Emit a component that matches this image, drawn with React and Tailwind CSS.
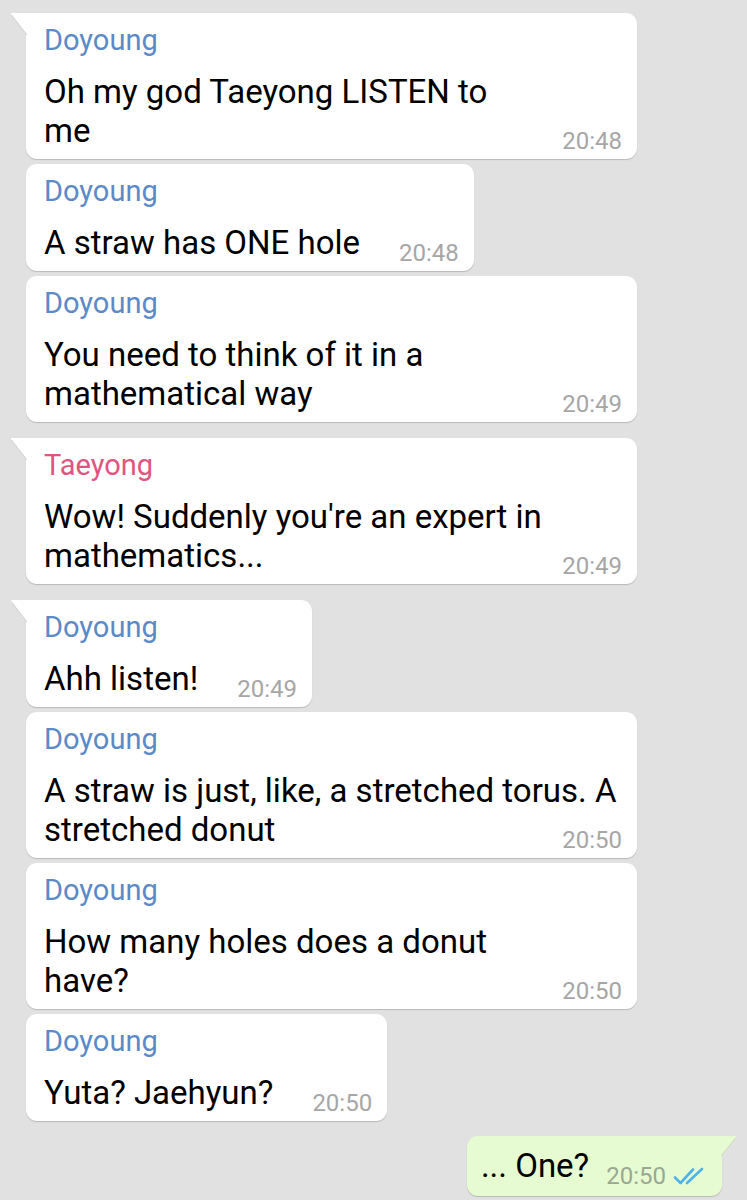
import React from "react";

const BLUE = "text-[#5b8ac7]";
const PINK = "text-[#e0557f]";

const messages = [
  { name: "Doyoung", color: BLUE, lines: ["Oh my god Taeyong LISTEN to", "me"], time: "20:48", first: true },
  { name: "Doyoung", color: BLUE, lines: ["A straw has ONE hole"], time: "20:48" },
  { name: "Doyoung", color: BLUE, lines: ["You need to think of it in a", "mathematical way"], time: "20:49" },
  { name: "Taeyong", color: PINK, lines: ["Wow! Suddenly you're an expert in", "mathematics..."], time: "20:49", first: true },
  { name: "Doyoung", color: BLUE, lines: ["Ahh listen!"], time: "20:49", first: true },
  { name: "Doyoung", color: BLUE, lines: ["A straw is just, like, a stretched torus. A", "stretched donut"], time: "20:50" },
  { name: "Doyoung", color: BLUE, lines: ["How many holes does a donut", "have?"], time: "20:50" },
  { name: "Doyoung", color: BLUE, lines: ["Yuta? Jaehyun?"], time: "20:50" },
];

function TailLeft() {
  return (
    <svg className="absolute left-[-16px] top-0" width="17" height="22" viewBox="0 0 17 22">
      <path d="M17 0 L2.5 0 Q0 0 1.5 2 L17 22 Z" fill="#ffffff" />
      <path d="M1.5 2 L17 22" stroke="#cfcfcf" strokeWidth="1" fill="none" />
    </svg>
  );
}

function TailRight() {
  return (
    <svg className="absolute right-[-15px] top-0" width="16" height="20" viewBox="0 0 16 20">
      <path d="M0 0 L13.5 0 Q16 0 14.5 2 L0 20 Z" fill="#e6fbd2" />
      <path d="M14.5 2 L0 20" stroke="#c9dcb8" strokeWidth="1" fill="none" />
    </svg>
  );
}

function Incoming({ m, gap }) {
  const multi = m.lines.length > 1;
  const head = m.lines.slice(0, -1);
  const last = m.lines[m.lines.length - 1];
  return (
    <div
      className={`relative bg-white shadow-[0_1px_1px_rgba(0,0,0,0.18)] pl-[18px] pr-[15px] pt-[10px] pb-[9px] ${
        m.first ? "rounded-[11px] rounded-tl-none" : "rounded-[11px]"
      } ${multi ? "w-[611px]" : "w-fit"} ${gap}`}
    >
      {m.first && <TailLeft />}
      <div className={`text-[29px] leading-[34px] ${m.color}`}>{m.name}</div>
      <div className="mt-[15px] text-[33px] leading-[39px] text-black whitespace-nowrap">
        {head.map((l, i) => (
          <div key={i}>{l}</div>
        ))}
        <div className="flex justify-between gap-[39px]">
          <span>{last}</span>
          <span className="self-end mb-[-5px] text-[24px] leading-[28px] text-[#a6a6a6]">{m.time}</span>
        </div>
      </div>
    </div>
  );
}

export default function App() {
  return (
    <div
      className="w-[747px] min-h-[1200px] bg-[#e1e1e1] pt-[13px] pl-[26px] pr-[25px] flex flex-col items-start"
      style={{ fontFamily: "Roboto, 'Noto Sans', sans-serif" }}
    >
      {messages.map((m, i) => (
        <Incoming key={i} m={m} gap={i === 0 ? "" : m.first ? "mt-[16px]" : "mt-[5px]"} />
      ))}

      <div className="relative self-end mt-[15px] bg-[#e6fbd2] rounded-[11px] rounded-tr-none shadow-[0_1px_1px_rgba(0,0,0,0.18)] pl-[14px] pr-[17px] pt-[10px] pb-[11px]">
        <TailRight />
        <div className="flex gap-[17px] text-[33px] leading-[39px] text-black whitespace-nowrap">
          <span>... One?</span>
          <div className="self-end mb-[-5px] flex items-center gap-[7px]">
            <span className="text-[24px] leading-[28px] text-[#98a891]">20:50</span>
            <svg width="32" height="18" viewBox="0 0 32 18" fill="none">
              <path d="M2 10.5 L7.5 16 L20 2.5" stroke="#4fb2e8" strokeWidth="2.6" strokeLinecap="round" strokeLinejoin="round" />
              <path d="M14 16 L29 2" stroke="#4fb2e8" strokeWidth="2.6" strokeLinecap="round" />
            </svg>
          </div>
        </div>
      </div>
    </div>
  );
}
